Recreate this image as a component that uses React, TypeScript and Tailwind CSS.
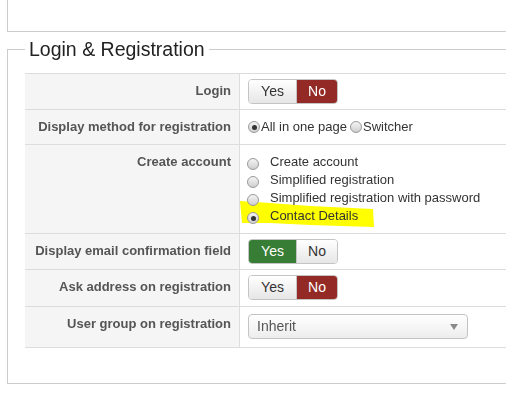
import React from "react";

function Toggle({ value }: { value: "yes" | "no" }) {
  const inactive = "bg-gradient-to-b from-[#ffffff] to-[#e6e6e6] text-[#333]";
  return (
    <div className="flex h-[25px] w-[90px] rounded-[4px] border border-[#c4c4c4] overflow-hidden text-[14px] leading-[23px]">
      <div
        className={
          "w-[48px] text-center border-r border-[#c4c4c4] " +
          (value === "yes" ? "bg-[#377d35] text-white" : inactive)
        }
      >
        Yes
      </div>
      <div
        className={
          "flex-1 text-center " +
          (value === "no" ? "bg-[#942a25] text-white" : inactive)
        }
      >
        No
      </div>
    </div>
  );
}

function Radio({ checked, className }: { checked?: boolean; className?: string }) {
  return (
    <div
      className={
        "flex shrink-0 items-center justify-center w-[12px] h-[12px] rounded-full border border-[#9a9a9a] bg-gradient-to-b from-[#f4f4f4] to-[#cfcfcf] " +
        (className || "")
      }
    >
      {checked ? <div className="w-[5px] h-[5px] rounded-full bg-[#333]" /> : null}
    </div>
  );
}

function Row({
  label,
  children,
  ctrlClass,
  last,
}: {
  label: string;
  children: React.ReactNode;
  ctrlClass: string;
  last?: boolean;
}) {
  return (
    <div className={"grid grid-cols-[215px_1fr] border-t border-[#dddddd] " + (last ? "border-b" : "")}>
      <div className="bg-[#f5f5f5] border-r border-[#dddddd] pt-[8px] pr-[8px] text-right text-[13px] leading-[18px] font-bold text-[#555]">
        {label}
      </div>
      <div className={"relative pl-[8px] " + ctrlClass}>{children}</div>
    </div>
  );
}

export default function App() {
  const opts = [
    "Create account",
    "Simplified registration",
    "Simplified registration with password",
    "Contact Details",
  ];
  return (
    <div
      className="w-[506px] h-[393px] overflow-hidden bg-white"
      style={{ fontFamily: '"Liberation Sans", Arial, sans-serif' }}
    >
      <div className="w-[800px] pl-[7px]">
        <div className="h-[32px] border-l border-b border-[#cccccc]" />
        <fieldset className="mt-[5px] border border-[#cccccc] pl-[17px] pt-[12px] pb-[35px]">
          <legend className="px-[4px] text-[19.5px] leading-[24px] text-[#222]">Login &amp; Registration</legend>
          <div className="w-[600px] text-[#333]">
            <Row label="Login" ctrlClass="py-[5px]">
              <Toggle value="no" />
            </Row>
            <Row label="Display method for registration" ctrlClass="py-[8px]">
              <div className="flex items-center text-[13px] leading-[18px]">
                <Radio checked />
                <span className="ml-[1px]">All in one page</span>
                <Radio className="ml-[3px]" />
                <span className="ml-[1px]">Switcher</span>
              </div>
            </Row>
            <Row label="Create account" ctrlClass="py-[8px]">
              <svg
                className="absolute left-0 top-0 mix-blend-multiply pointer-events-none"
                width="140"
                height="90"
                viewBox="0 0 140 90"
              >
                <polygon
                  points="0,56 30,58 70,61 133,64 134,82 70,80 30,78 2,78"
                  fill="#ffff00"
                />
              </svg>
              <div className="relative flex flex-col text-[13px] leading-[18px]">
                {opts.map((o, i) => (
                  <div key={o} className="flex items-start h-[18px]">
                    <Radio checked={i === 3} className="mt-[5px] ml-[-1px]" />
                    <span className="ml-[11px]">{o}</span>
                  </div>
                ))}
              </div>
            </Row>
            <Row label="Display email confirmation field" ctrlClass="py-[5px]">
              <Toggle value="yes" />
            </Row>
            <Row label="Ask address on registration" ctrlClass="pt-[5px] pb-[6px]">
              <Toggle value="no" />
            </Row>
            <Row label="User group on registration" ctrlClass="pt-[7px] pb-[8px]" last>
              <div className="flex items-center justify-between w-[220px] h-[25px] rounded-[4px] border border-[#c4c4c4] bg-gradient-to-b from-[#ffffff] to-[#ededed] pl-[8px] pr-[9px] text-[14px] text-[#555]">
                <span>Inherit</span>
                <svg width="8" height="6" viewBox="0 0 8 6">
                  <polygon points="0,0 8,0 4,6" fill="#8a8a8a" />
                </svg>
              </div>
            </Row>
          </div>
        </fieldset>
      </div>
    </div>
  );
}
